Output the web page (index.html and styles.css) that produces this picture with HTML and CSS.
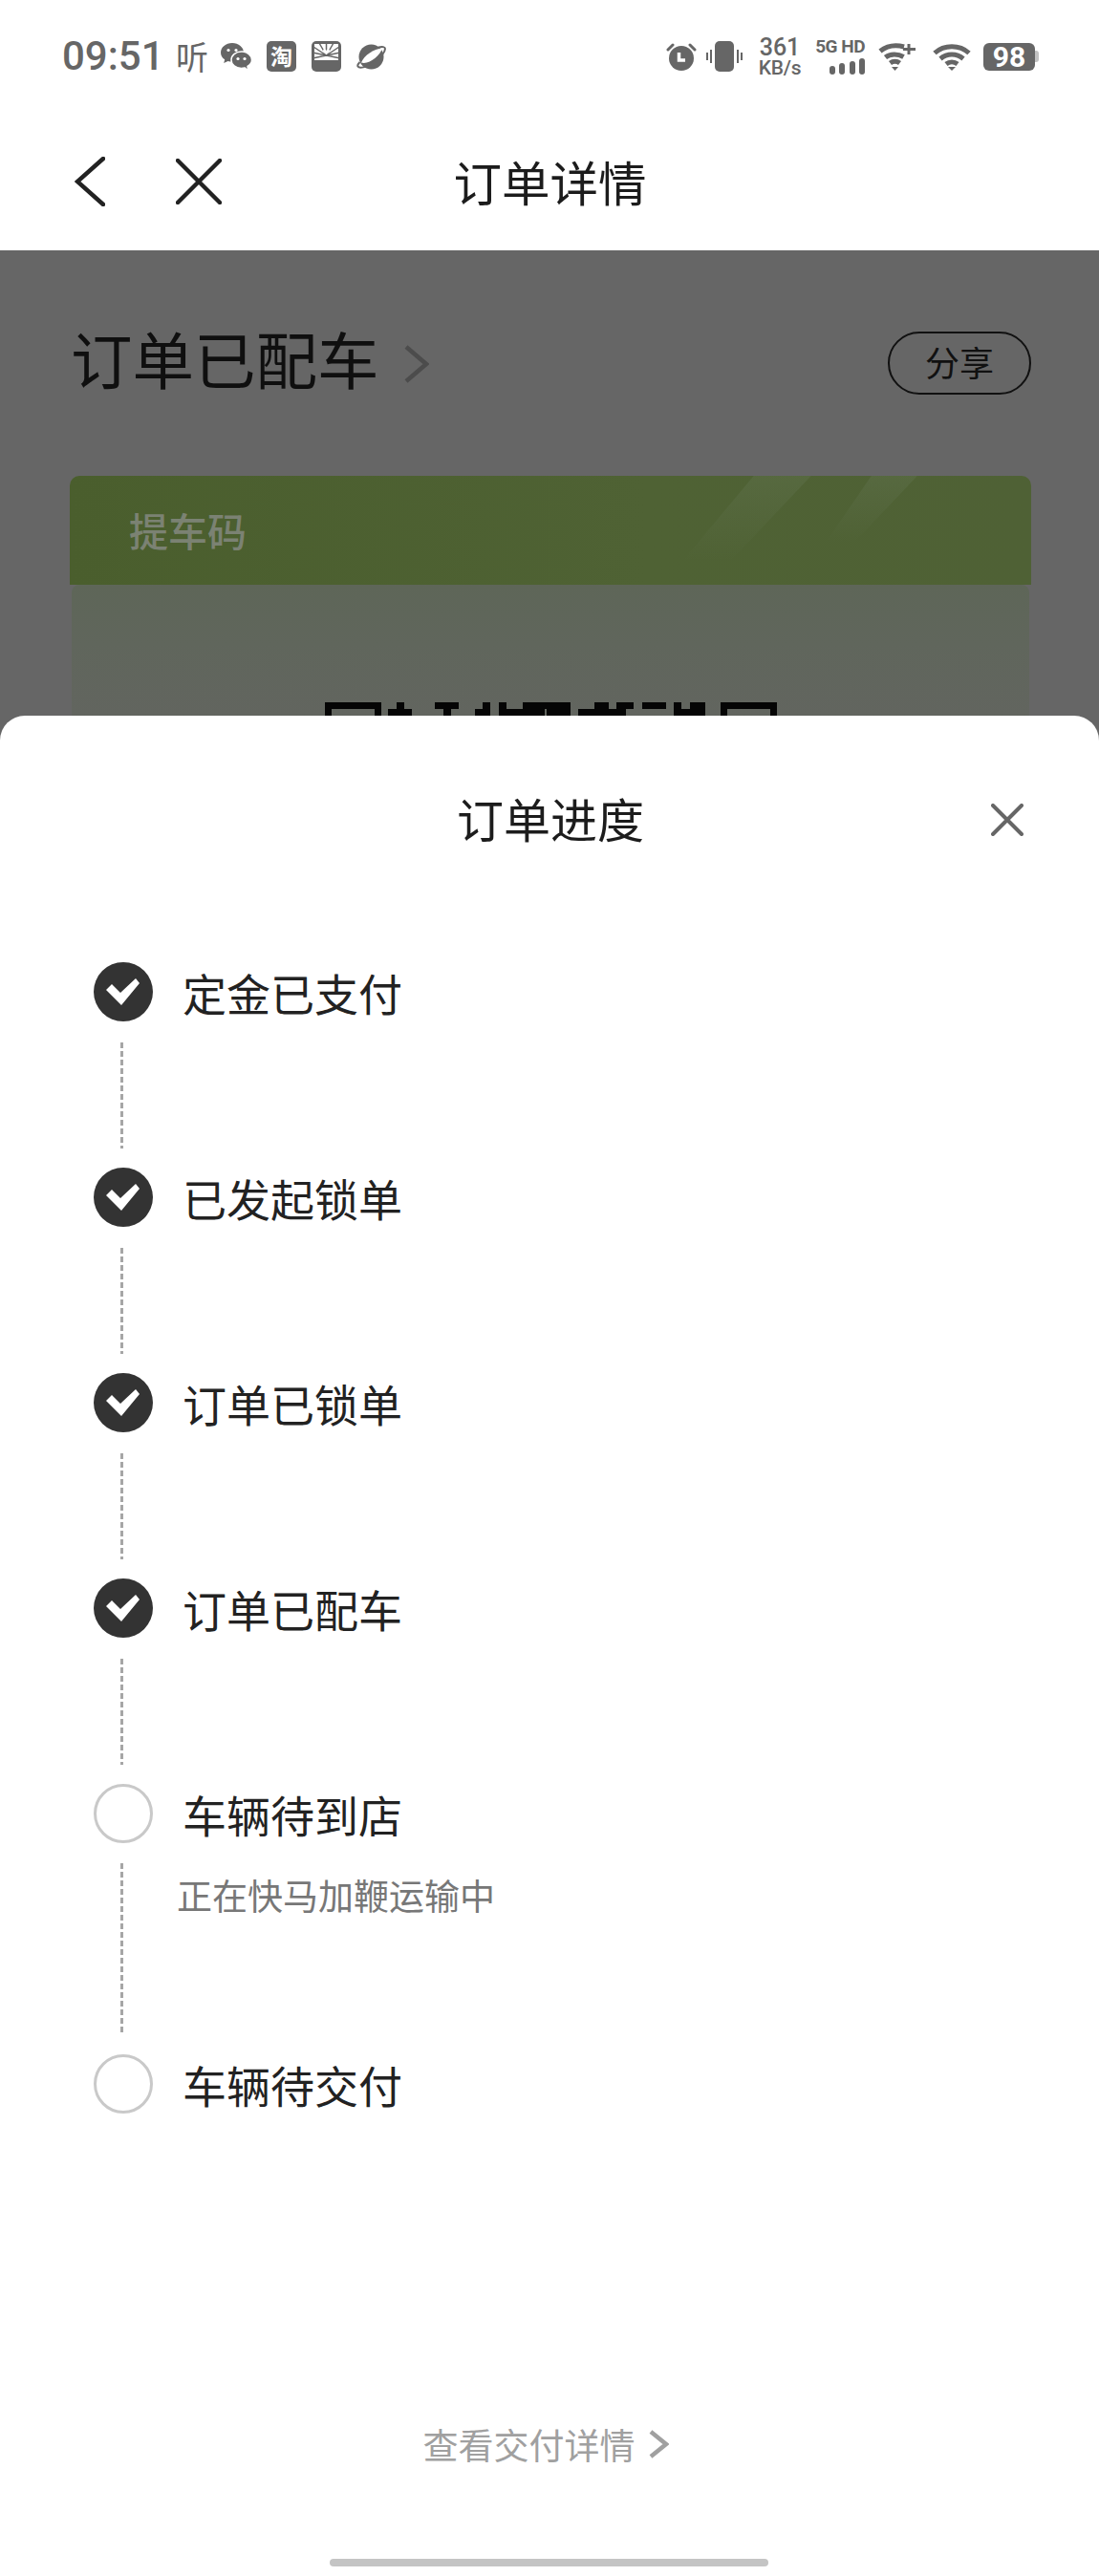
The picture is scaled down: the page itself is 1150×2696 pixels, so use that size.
FILE: index.html
```html
<!DOCTYPE html>
<html lang="zh-CN">
<head>
<meta charset="utf-8">
<title>订单详情</title>
<link rel="stylesheet" href="styles.css">
</head>
<body>
<div class="screen">
  <div class="status">
    <div class="status-left">
      <span class="time">09:51</span>
      <span class="ting">听</span>
      <svg class="ic-wechat" viewBox="0 0 32 31"><path class="fill" d="M12 1C5.4 1 0 5.4 0 10.9c0 3 1.6 5.6 4.2 7.4L3.2 22l4.3-2.1c1.4.4 3 .7 4.5.7 6.6 0 12-4.4 12-9.7S18.6 1 12 1z"/><circle class="eye" cx="8" cy="8.5" r="1.6"/><circle class="eye" cx="16" cy="8.5" r="1.6"/><path class="fill cut" d="M21.5 10C15.6 10 11 13.9 11 18.7s4.6 8.7 10.5 8.7c1.2 0 2.4-.2 3.5-.5l3.6 3.1-.6-4.6c2.7-1.6 4.5-3.9 4.5-6.7 0-4.8-4.7-8.7-10.500-8.700z"/><circle class="eye" cx="18" cy="17.5" r="1.6"/><circle class="eye" cx="25" cy="17.5" r="1.6"/></svg>
      <span class="ic-tao">淘</span>
      <svg class="ic-orange" viewBox="0 0 31 32"><rect class="fill" width="31" height="32" rx="5"/><path class="eye" d="M3 3h25v17H3z"/><g class="rays"><path d="M15.5 15L15.500 2M15.500 15L8 2M15.500 15L23 2M15.500 15L2 6M15.500 15L29 6M15.500 15L1 12M15.500 15L30 12M15.500 15L1 18M15.500 15L30 18"/></g><path class="eye" d="M12.500 9c1.200-.8 2.400 0 3 .8.600-.8 1.800-1.600 3-.8 1.200 1 .5 2.800-3 5.200-3.500-2.400-4.200-4.200-3-5.200z"/></svg>
      <svg class="ic-planet" viewBox="0 0 31 27"><circle class="fill" cx="15.500" cy="13.500" r="13"/><path class="eye" d="M5 19.500C8 12 18 5 27 4.500 25 12 13 22 5 19.500z"/><path class="ring" d="M23 3.500c4-1 7-.5 7 1.500 0 4-6 10-13 15-7 4.500-14 6-15.500 3.500-.6-1 .3-2.700 2-4.500"/></svg>
    </div>
    <div class="status-right">
      <svg class="ic-alarm" viewBox="0 0 32 30"><circle class="fill" cx="16" cy="17" r="13"/><path class="line-w" d="M13.500 11v8h6.500"/><path class="line" d="M2 8l5-5M30 8l-5-5"/></svg>
      <svg class="ic-vib" viewBox="0 0 38 32"><rect class="fill" x="9" y="0" width="20" height="32" rx="5"/><path class="line-thin" d="M5 9v14M1 12v8M33 9v14M37 12v8"/></svg>
      <div class="speed"><span class="speed-num">361</span><span class="speed-unit">KB/s</span></div>
      <div class="net">
        <span class="net-label">5G HD</span>
        <div class="bars"><i class="bar b1"></i><i class="bar b2"></i><i class="bar b3"></i><i class="bar b4"></i></div>
      </div>
      <svg class="ic-wifiplus" viewBox="0 0 39 30"><path class="arc" d="M2 9.500C9 4 18 2.500 27 5"/><path class="arc" d="M7.500 16c5-4 13-4 19-.500"/><path class="arc" d="M12.500 22c3-2.300 7-2.300 10 0"/><path class="fill" d="M14 26h7l-3.500 4z"/><path class="plus" d="M32 2v11M26 7.500h13"/></svg>
      <svg class="ic-wifi" viewBox="0 0 40 30"><path class="arc" d="M2 11.500c10-9 26-9 36 0"/><path class="arc" d="M8 17.500c7-6 17-6 24 0"/><path class="arc" d="M14 23c3.500-2.800 8.500-2.800 12 0"/><path class="fill" d="M16 26h8l-4 4z"/></svg>
      <div class="battery"><span class="battery-body">98</span><i class="battery-nub"></i></div>
    </div>
  </div>

  <header class="nav">
    <div class="nav-icons">
      <svg class="ic-back" viewBox="0 0 32 52"><path d="M30 2L3 26l27 24"/></svg>
      <svg class="ic-x" viewBox="0 0 48 48"><path d="M2 2l44 44M46 2L2 46"/></svg>
    </div>
    <h1 class="nav-title">订单详情</h1>
  </header>

  <main class="page">
    <div class="page-head">
      <div class="order-state">
        <span class="order-title">订单已配车</span>
        <svg class="ic-chev-dim" viewBox="0 0 26 40"><path d="M2 2l21 18L2 38"/></svg>
      </div>
      <span class="share">分享</span>
    </div>
    <section class="card">
      <div class="card-top">
        <svg class="streaks" viewBox="0 0 1005 114" preserveAspectRatio="none"><defs><linearGradient id="sg" x1="0" y1="0" x2="0" y2="1"><stop offset="0" stop-color="#8a9a8a" stop-opacity=".13"/><stop offset="1" stop-color="#8a9a8a" stop-opacity="0"/></linearGradient></defs><polygon fill="url(#sg)" points="715,0 775,0 690,90 640,90"/><polygon fill="url(#sg)" points="838,0 886,0 820,70 790,70"/></svg>
        <span class="code-label">提车码</span>
      </div>
      <div class="card-panel">
        <svg class="qr" viewBox="340 735 473 14"><path d="M340 735h59v14h-7v-7h-45v7h-7zM415 735h8v7h8v7h-25v-7h9zM455 735h25v7h-8v7h-8v-7h-9zM505 735h8v14h-16v-7h8zM522 735h8v7h40v7h-48zM547 735h50v14h-25v-7h-25zM622 735h15v7h18v7h-50v-7h17zM645 735h18v7h-18zM672 735h25v7h-25zM705 735h8v7h9v-7h16v14h-33zM754 735h59v14h-7v-7h-45v7h-7z"/></svg>
      </div>
    </section>
  </main>

  <div class="sheet">
    <div class="sheet-head">
      <span></span>
      <h2 class="sheet-title">订单进度</h2>
      <svg class="ic-close" viewBox="0 0 34 34"><path d="M2 2l30 30M32 2L2 32"/></svg>
    </div>
    <ol class="steps">
      <li class="step">
        <div class="step-rail"><svg class="dot-done" viewBox="0 0 62 62"><circle cx="31" cy="31" r="31"/><polygon points="13,29 19,23 28,32 44,17 48,22 29,45"/></svg><i class="dash"></i></div>
        <div class="step-body"><span class="step-label">定金已支付</span></div>
      </li>
      <li class="step">
        <div class="step-rail"><svg class="dot-done" viewBox="0 0 62 62"><circle cx="31" cy="31" r="31"/><polygon points="13,29 19,23 28,32 44,17 48,22 29,45"/></svg><i class="dash"></i></div>
        <div class="step-body"><span class="step-label">已发起锁单</span></div>
      </li>
      <li class="step">
        <div class="step-rail"><svg class="dot-done" viewBox="0 0 62 62"><circle cx="31" cy="31" r="31"/><polygon points="13,29 19,23 28,32 44,17 48,22 29,45"/></svg><i class="dash"></i></div>
        <div class="step-body"><span class="step-label">订单已锁单</span></div>
      </li>
      <li class="step">
        <div class="step-rail"><svg class="dot-done" viewBox="0 0 62 62"><circle cx="31" cy="31" r="31"/><polygon points="13,29 19,23 28,32 44,17 48,22 29,45"/></svg><i class="dash"></i></div>
        <div class="step-body"><span class="step-label">订单已配车</span></div>
      </li>
      <li class="step">
        <div class="step-rail"><i class="dot-todo"></i><i class="dash dash-long"></i></div>
        <div class="step-body"><span class="step-label">车辆待到店</span><span class="step-note">正在快马加鞭运输中</span></div>
      </li>
      <li class="step">
        <div class="step-rail"><i class="dot-todo"></i></div>
        <div class="step-body"><span class="step-label">车辆待交付</span></div>
      </li>
    </ol>
    <div class="sheet-foot">
      <span class="foot-link">查看交付详情</span>
      <svg class="ic-chev-foot" viewBox="0 0 21 30"><path d="M2 2l16 13L2 28"/></svg>
    </div>
    <div class="home-bar"></div>
  </div>
</div>
</body>
</html>
```

FILE: styles.css
```css
* { box-sizing: border-box; }
html, body { margin: 0; padding: 0; background: #fff; }
body { font-family: "Noto Sans CJK SC", "Noto Sans", sans-serif; color: #222; }
h1, h2, ol { margin: 0; padding: 0; font-weight: 400; }
li { list-style: none; }
svg { display: block; flex: none; }

.screen { position: relative; width: 1150px; height: 2696px; overflow: hidden; background: #fff; }

/* status bar */
.status { height: 118px; padding: 0 63px 0 65px; display: flex; align-items: center; justify-content: space-between; color: #666; }
.status-left, .status-right { display: flex; align-items: center; }
.fill { fill: #666; }
.eye { fill: #fff; }
.time { font: 500 42px/44px Roboto, sans-serif; width: 102px; letter-spacing: 0; }
.ting { margin-left: 17px; width: 34px; font-size: 34px; line-height: 34px; font-weight: 400; }
.ic-wechat { width: 32px; height: 31px; margin-left: 13px; }
.cut { stroke: #fff; stroke-width: 1.500; }
.ic-tao { margin-left: 16px; width: 31px; height: 32px; border-radius: 5px; background: #666; color: #fff; font-size: 23px; line-height: 31px; font-weight: 700; text-align: center; }
.ic-orange { width: 31px; height: 32px; margin-left: 16px; }
.rays path { stroke: #666; stroke-width: 1.500; fill: none; }
.ic-planet { width: 31px; height: 27px; margin-left: 16px; }
.ring { fill: none; stroke: #666; stroke-width: 2; }

.ic-alarm { width: 32px; height: 30px; }
.line-w { fill: none; stroke: #fff; stroke-width: 3.500; }
.line { fill: none; stroke: #666; stroke-width: 3; stroke-linecap: round; }
.ic-vib { width: 38px; height: 32px; margin-left: 10px; }
.line-thin { fill: none; stroke: #666; stroke-width: 2; }
.speed { margin-left: 17px; width: 44px; display: flex; flex-direction: column; align-items: center; font-family: Roboto, sans-serif; font-weight: 500; }
.speed-num { font-size: 25px; line-height: 24px; }
.speed-unit { font-size: 21px; line-height: 19px; letter-spacing: -.3px; white-space: nowrap; }
.net { margin-left: 16px; width: 51px; display: flex; flex-direction: column; align-items: flex-end; gap: 4px; }
.net-label { font: 700 19px/16px Roboto, sans-serif; white-space: nowrap; letter-spacing: -.5px; }
.bars { display: flex; align-items: flex-end; gap: 4.500px; height: 17px; }
.bar { width: 6px; background: #666; border-radius: 3px; }
.b1 { height: 9px; } .b2 { height: 12px; } .b3 { height: 14px; } .b4 { height: 17px; }
.ic-wifiplus { width: 39px; height: 30px; margin-left: 14px; }
.ic-wifi { width: 40px; height: 30px; margin-left: 18px; }
.arc { fill: none; stroke: #666; stroke-width: 5; }
.plus { fill: none; stroke: #666; stroke-width: 3; }
.battery { display: flex; align-items: center; margin-left: 13px; }
.battery-body { width: 54px; height: 29px; border-radius: 6px; background: #666; color: #fff; font: 700 30px/29px Roboto, sans-serif; text-align: center; }
.battery-nub { width: 4px; height: 12px; background: #c2c2c2; border-radius: 0 3px 3px 0; }

/* nav */
.nav { height: 144px; display: grid; grid-template-columns: 1fr auto 1fr; align-items: center; }
.nav-icons { display: flex; align-items: center; padding-left: 78px; gap: 74px; }
.ic-back { width: 32px; height: 52px; }
.ic-x { width: 48px; height: 48px; }
.ic-back path, .ic-x path { fill: none; stroke: #222; stroke-width: 4.500; stroke-linecap: round; }
.nav-title { font-size: 50.500px; line-height: 60px; margin-bottom: 3px; padding-left: 1px; color: #1c1c1c; }

/* dimmed page */
.page { height: 2434px; background: #666; padding: 85px 71px 0 73px; }
.page-head { display: flex; align-items: center; justify-content: space-between; height: 66px; }
.order-state { display: flex; align-items: center; gap: 26px; padding-left: 1px; }
.order-title { font-size: 64.500px; line-height: 66px; margin-bottom: 12px; color: #0f0f0f; }
.ic-chev-dim { width: 26px; height: 40px; margin-top: 2px; }
.ic-chev-dim path { fill: none; stroke: #4c4c4c; stroke-width: 4.500; }
.share { width: 150px; height: 66px; border: 2px solid #111; border-radius: 33px; display: flex; align-items: center; justify-content: center; padding-bottom: 4px; font-size: 36px; line-height: 1; color: #111; }
.card { margin-top: 85px; border-radius: 10px 10px 0 0; overflow: hidden; }
.card-top { position: relative; height: 114px; padding: 28px 0 0 62px; background: linear-gradient(90deg, #4a5e2d, #4f6234 60%, #4f6135); }
.streaks { position: absolute; left: 0; top: 0; width: 100%; height: 100%; }
.code-label { position: relative; font-size: 41px; line-height: 56px; font-weight: 500; color: #7b8273; }
.card-panel { margin: 0 2px; height: 137px; padding-top: 123px; border-radius: 8px 8px 0 0; background: linear-gradient(180deg, #5e6658 0%, #60665c 45%, #62655f 100%); }
.qr { width: 473px; height: 14px; margin-left: 265px; fill: #050505; }

/* sheet */
.sheet { position: absolute; left: 0; top: 749px; width: 1150px; height: 1947px; background: #fff; border-radius: 26px 26px 0 0; display: flex; flex-direction: column; }
.sheet-head { height: 218px; display: grid; grid-template-columns: 1fr auto 1fr; align-items: center; }
.sheet-title { font-size: 49px; line-height: 60px; margin-bottom: 5px; padding-left: 2px; color: #1c1c1c; }
.ic-close { width: 34px; height: 34px; justify-self: end; margin-right: 79px; }
.ic-close path { fill: none; stroke: #666; stroke-width: 4; stroke-linecap: round; }
.steps { margin-top: 40px; padding-left: 98px; display: flex; flex-direction: column; }
.step { display: flex; gap: 31px; }
.step-rail { width: 62px; display: flex; flex-direction: column; }
.dot-done { width: 62px; height: 62px; }
.dot-done circle { fill: #333; }
.dot-done polygon { fill: #fff; }
.dot-todo { display: block; width: 62px; height: 62px; border-radius: 50%; border: 3px solid #c9c9c9; }
.dash { display: block; width: 3px; height: 111px; margin: 22px 0 20px 28px; background: repeating-linear-gradient(180deg, #a6a6a6 0 6px, transparent 6px 9px); }
.dash-long { height: 177px; margin-top: 21px; margin-bottom: 23px; }
.step-body { display: flex; flex-direction: column; align-items: flex-start; }
.step-label { margin-top: 0; font-size: 46px; line-height: 62px; color: #222; }
.step-note { margin: 29px 0 0 -6px; font-size: 37px; line-height: 50px; color: #777; }
.sheet-foot { margin-top: auto; display: flex; align-items: center; justify-content: center; gap: 14px; height: 50px; padding-right: 8px; }
.foot-link { font-size: 37px; line-height: 50px; color: #a0a0a0; }
.ic-chev-foot { width: 21px; height: 30px; }
.ic-chev-foot path { fill: none; stroke: #a0a0a0; stroke-width: 4.500; }
.home-bar { width: 459px; height: 8px; margin: 95px 0 10px 345px; background: #c4c4c4; border-radius: 4px; }
```
